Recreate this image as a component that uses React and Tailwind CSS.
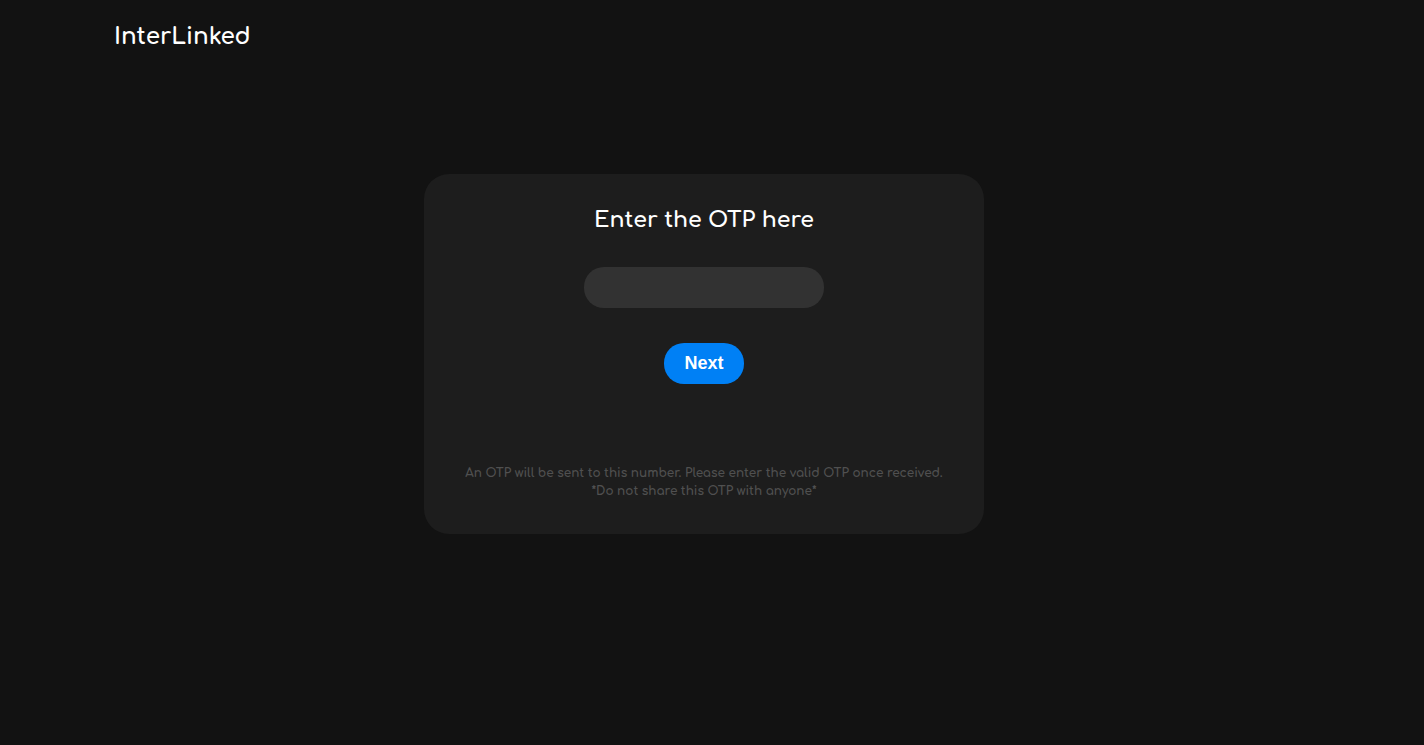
export default function App() {
  return (
    <div className="flex min-h-screen flex-col bg-[#121212] font-['Comfortaa','Lato',sans-serif] text-white">
      <header className="px-[8%] pt-[21px] pb-5">
        <a href="#" className="text-[23px] leading-8 font-bold">InterLinked</a>
      </header>
      <main className="flex justify-center pt-[101px] pr-4">
        <form
          className="flex w-full max-w-[560px] flex-col items-center rounded-[25px] bg-[#1d1d1d] px-8 pt-[30px] pb-[34px]"
          onSubmit={(event) => event.preventDefault()}
        >
          <label htmlFor="otp" className="text-[22px] leading-8 font-bold">Enter the OTP here</label>
          <input
            id="otp"
            type="text"
            inputMode="numeric"
            autoComplete="one-time-code"
            className="mt-[31px] h-[41px] w-60 rounded-[20px] bg-[#323232] px-4 text-center text-lg outline-none"
          />
          <button
            type="submit"
            className="mt-[35px] h-[41px] w-20 rounded-[20px] bg-[#0080f5] pb-0.5 font-['Liberation_Sans',sans-serif] text-lg font-bold"
          >
            Next
          </button>
          <p className="mt-20 text-center text-[12px] leading-[18px] font-bold text-[#505050]">
            An OTP will be sent to this number. Please enter the valid OTP once received.
            <br />
            *Do not share this OTP with anyone*
          </p>
        </form>
      </main>
    </div>
  );
}
